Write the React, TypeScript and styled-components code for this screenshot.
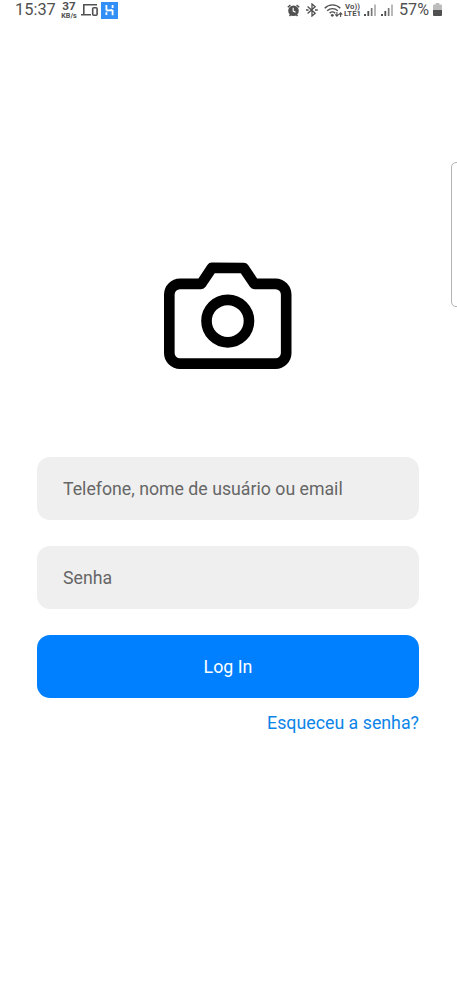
import React from 'react';
import styled, { createGlobalStyle } from 'styled-components';

const GlobalStyle = createGlobalStyle`
  * { box-sizing: border-box; }
  body {
    margin: 0;
    background: #fff;
    font-family: Roboto, sans-serif;
  }
`;

const Screen = styled.main`
  position: relative;
  display: flex;
  flex-direction: column;
  width: 457px;
  height: 1002px;
  overflow: hidden;
  background: #fff;
`;

const StatusBar = styled.header`
  display: flex;
  justify-content: space-between;
  height: 20px;
  padding: 0 15px;
  color: #505050;
`;

const StatusGroup = styled.div`
  display: flex;
  align-items: center;
  height: 20px;
`;

const StatusText = styled.span<{ $size: number; $width: number; $left?: number }>`
  width: ${({ $width }) => $width}px;
  margin-left: ${({ $left = 0 }) => $left}px;
  font-size: ${({ $size }) => $size}px;
  line-height: 20px;
  white-space: nowrap;
`;

const StackedLabel = styled.span<{ $width: number; $left?: number }>`
  display: flex;
  flex-direction: column;
  align-items: center;
  width: ${({ $width }) => $width}px;
  margin-left: ${({ $left = 0 }) => $left}px;
  font-weight: 700;
  white-space: nowrap;
`;

const StackedLine = styled.span<{ $size: number; $height: number }>`
  font-size: ${({ $size }) => $size}px;
  line-height: ${({ $height }) => $height}px;
`;

const Glyph = styled.svg<{ $left?: number }>`
  display: block;
  flex: none;
  margin-left: ${({ $left = 0 }) => $left}px;
`;

const Content = styled.form`
  display: flex;
  flex-direction: column;
  padding: 232px 38px 0 37px;
`;

const CameraIcon = styled.svg`
  display: block;
  align-self: center;
  width: 127.5px;
  height: 127.5px;
  margin-bottom: 77.5px;
`;

const Field = styled.input`
  height: 63px;
  margin: 0 0 26px;
  padding: 0 26px;
  border: 0;
  border-radius: 13px;
  outline: none;
  background: #efefef;
  color: #666;
  font: 400 17.73px Roboto, sans-serif;

  &::placeholder {
    color: #666;
    opacity: 1;
  }
`;

const LoginButton = styled.button`
  height: 62.5px;
  padding: 1px 0 0;
  border: 0;
  border-radius: 13px;
  background: #0080ff;
  color: #fff;
  font: 400 17.8px Roboto, sans-serif;
`;

const ForgotLink = styled.a`
  align-self: flex-end;
  margin-top: 13.5px;
  color: #0d84e8;
  font-size: 17.8px;
  line-height: 24px;
  text-decoration: none;
`;

const EdgeHandle = styled.div`
  position: absolute;
  top: 162px;
  right: -6px;
  width: 12px;
  height: 145px;
  border: 1px solid #b4b4b4;
  border-radius: 5px;
`;

const Signal = ({ left }: { left: number }) => (
  <Glyph $left={left} width="12" height="14" viewBox="0 0 12 14">
    <path d="M0 11h2v2H0zM3.4 8h1.8v5H3.4z" fill="#505050" />
    <path d="M6.8 5h1.7v8H6.8z" fill="#777" />
    <path d="M10.2 1.5h1.6V13h-1.6z" fill="#a8a8a8" />
  </Glyph>
);

export default function App() {
  return (
    <Screen>
      <GlobalStyle />
      <StatusBar>
        <StatusGroup>
          <StatusText $size={16.4} $width={45}>15:37</StatusText>
          <StackedLabel $width={18}>
            <StackedLine $size={11.7} $height={11}>37</StackedLine>
            <StackedLine $size={7.2} $height={7}>KB/s</StackedLine>
          </StackedLabel>
          <Glyph $left={3} width="17" height="14" viewBox="0 0 17 14" fill="none" stroke="#505050" strokeWidth="1.6">
            <path d="M2.8 11V1.8H16M0 11.8h10" />
            <rect x="11.7" y="4.7" width="4.4" height="7.6" rx="1" />
          </Glyph>
          <Glyph $left={3} width="17" height="17" viewBox="0 0 17 17">
            <path d="M0 0h17v17H0z" fill="#318ff5" />
            <path d="M5.4 3v5.5M5.4 10.2V13M11.6 3v3M11.6 8v5.2M5.4 8.5c3-.3 3 0 6.2-.5" fill="none" stroke="#fff" strokeWidth="1.8" />
          </Glyph>
        </StatusGroup>
        <StatusGroup>
          <Glyph width="13" height="13" viewBox="0 0 13 13">
            <path d="M.8 3.2 3.4 1M12.2 3.2 9.6 1M2.5 12l1.3-1.4M10.5 12l-1.3-1.4" stroke="#505050" strokeWidth="1.5" />
            <circle cx="6.5" cy="6.8" r="5.3" fill="#505050" />
            <path d="M6.2 3.8v3.3l2.4 1.2" fill="none" stroke="#fff" strokeWidth="1.1" />
          </Glyph>
          <Glyph $left={6} width="12" height="14" viewBox="0 0 12 14" fill="none" stroke="#505050" strokeWidth="1.3">
            <path d="m1.6 3.4 7.6 6.8L6 13V1l3.2 2.8-7.6 6.8" />
            <path d="M0 7h2.6M9 7h2.8" strokeWidth="1.6" />
          </Glyph>
          <Glyph $left={6} width="19" height="15" viewBox="0 0 19 15" fill="none" stroke="#505050" strokeWidth="1.35">
            <path d="M.7 5.2c4.4-4.5 11.2-4.5 15.6 0M3.2 7.8c3-3 7.6-3 10.6 0M5.6 10.2c1.8-1.7 4-1.7 5.6 0" />
            <circle cx="8.3" cy="12.3" r="1.4" fill="#505050" stroke="none" />
            <path d="M12.9 9v4M11.2 11.4l1.7 1.8 1.7-1.8M16.6 14v-4M14.9 11.6l1.7-1.8 1.7 1.8" strokeWidth="1.1" />
          </Glyph>
          <StackedLabel $width={17} $left={1}>
            <StackedLine $size={7.8} $height={7}>Vo))</StackedLine>
            <StackedLine $size={7.8} $height={7}>LTE1</StackedLine>
          </StackedLabel>
          <Signal left={3} />
          <Signal left={5} />
          <StatusText $size={16.2} $width={33} $left={6}>57%</StatusText>
          <Glyph $left={1} width="9" height="14" viewBox="0 0 9 14">
            <path d="M2.7 0h3.6v1.5H8q1 0 1 1V7H0V2.5q0-1 1-1h1.7z" fill="#bcbcbc" />
            <path d="M0 7h9v5q0 1-1 1H1q-1 0-1-1z" fill="#505050" />
          </Glyph>
        </StatusGroup>
      </StatusBar>
      <Content>
        <CameraIcon viewBox="0 0 24 24" fill="none" stroke="#000" strokeWidth="2" strokeLinecap="round" strokeLinejoin="round">
          <path d="M23 19a2 2 0 0 1-2 2H3a2 2 0 0 1-2-2V8a2 2 0 0 1 2-2h4l2-3h6l2 3h4a2 2 0 0 1 2 2z" />
          <circle cx="12" cy="13" r="4" />
        </CameraIcon>
        <Field type="text" placeholder="Telefone, nome de usuário ou email" />
        <Field type="password" placeholder="Senha" />
        <LoginButton type="button">Log In</LoginButton>
        <ForgotLink>Esqueceu a senha?</ForgotLink>
      </Content>
      <EdgeHandle />
    </Screen>
  );
}
